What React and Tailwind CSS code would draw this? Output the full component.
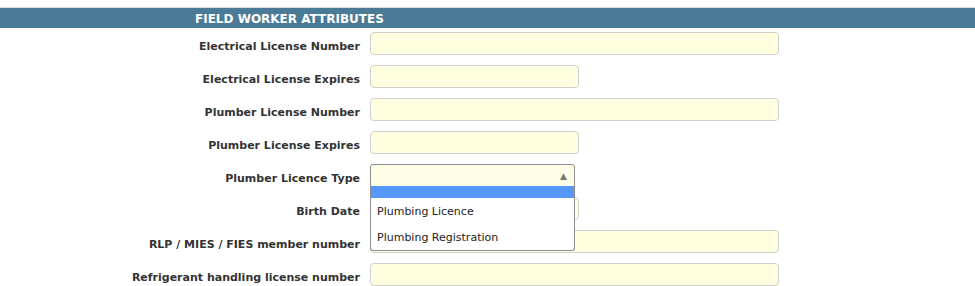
import React from 'react';

const rows = [
  { label: 'Electrical License Number', size: 'long' },
  { label: 'Electrical License Expires', size: 'short' },
  { label: 'Plumber License Number', size: 'long' },
  { label: 'Plumber License Expires', size: 'short' },
  { label: 'Plumber Licence Type', size: 'select' },
  { label: 'Birth Date', size: 'short' },
  { label: 'RLP / MIES / FIES member number', size: 'long' },
  { label: 'Refrigerant handling license number', size: 'long' },
];

const SelectOpen = () => (
  <div className="relative w-[205px] h-[23px]">
    <div className="h-[23px] w-full rounded-t-[3px] border border-[#8e8e8e] bg-[#fffde6] flex items-center justify-end pr-[7px] pt-[2px]">
      <span className="text-[9px] leading-none text-[#777]">▲</span>
    </div>
    {/* open options list */}
    <div className="absolute left-0 top-[22px] z-10 w-full rounded-b-[3px] border border-t-0 border-[#8e8e8e] bg-white">
      <div className="h-[12px] bg-[#5597fb]" />
      <div className="h-[26px] flex items-center pl-[6px] pt-[2px] text-[11px] text-[#222]">Plumbing Licence</div>
      <div className="h-[26px] flex items-center pl-[6px] pt-[2px] text-[11px] text-[#222]">Plumbing Registration</div>
    </div>
  </div>
);

export default function App() {
  return (
    <div className="w-[975px] h-[286px] bg-white overflow-hidden" style={{ fontFamily: '"DejaVu Sans", sans-serif' }}>
      <div className="h-[7px]" />
      <div className="h-[1px] bg-[#dcdcdc]" />
      <div className="h-[20px] bg-[#4b7a96] flex items-center pl-[195px] pt-[1px]">
        <span className="text-[12px] font-bold text-white">FIELD WORKER ATTRIBUTES</span>
      </div>
      <div className="pt-[4px] flex flex-col">
        {rows.map((r) => (
          <div key={r.label} className="h-[33px] flex items-start">
            <div className="w-[360px] h-[23px] flex items-center justify-end text-[11px] font-bold text-[#333] pt-[8px]">
              {r.label}
            </div>
            <div className="ml-[10px]">
              {r.size === 'select' ? (
                <SelectOpen />
              ) : (
                <div
                  className={`h-[23px] rounded-[4px] border border-[#cfcfcf] bg-[#ffffe0] ${
                    r.size === 'long' ? 'w-[409px]' : 'w-[209px]'
                  }`}
                />
              )}
            </div>
          </div>
        ))}
      </div>
    </div>
  );
}
